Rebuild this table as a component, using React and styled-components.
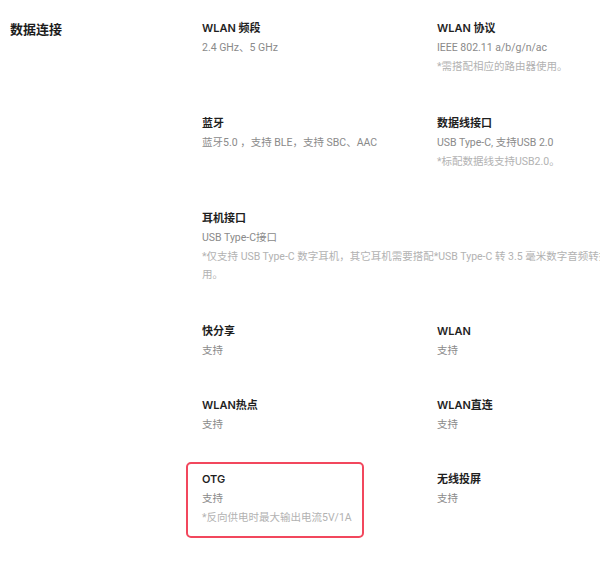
import React from "react";
import styled, { createGlobalStyle } from "styled-components";

const GlobalStyle = createGlobalStyle`
    html, body {
        margin: 0;
        padding: 0;
        background: #ffffff;
        overflow-x: hidden;
    }
    body {
        font-family: Inter, "Noto Sans CJK SC", sans-serif;
        -webkit-font-smoothing: antialiased;
    }
`;

const specs = [
    {
        title: "WLAN 频段",
        value: "2.4 GHz、5 GHz",
    },
    {
        title: "WLAN 协议",
        value: "IEEE 802.11 a/b/g/n/ac",
        note: "*需搭配相应的路由器使用。",
    },
    {
        title: "蓝牙",
        value: "蓝牙5.0 ，支持 BLE，支持 SBC、AAC",
    },
    {
        title: "数据线接口",
        value: "USB Type-C, 支持USB 2.0",
        note: "*标配数据线支持USB2.0。",
    },
    {
        title: "耳机接口",
        value: "USB Type-C接口",
        note: ["*仅支持 USB Type-C 数字耳机，其它耳机需要搭配*USB Type-C 转 3.5 毫米数字音频转接线使", "用。"],
        wide: true,
    },
    { title: "快分享", value: "支持" },
    { title: "WLAN", value: "支持" },
    { title: "WLAN热点", value: "支持" },
    { title: "WLAN直连", value: "支持" },
    {
        title: "OTG",
        value: "支持",
        note: "*反向供电时最大输出电流5V/1A",
        marked: true,
    },
    { title: "无线投屏", value: "支持" },
];

const App = () => {
    return <>
        <GlobalStyle />
        <Section>
            <Heading>数据连接</Heading>
            <SpecGrid>
                { specs.map(s =>
                    <SpecItem key={ s.title } $wide={ s.wide } $marked={ s.marked }>
                        <SpecTitle>{ s.title }</SpecTitle>
                        <SpecValue>{ s.value }</SpecValue>
                        { s.note && (Array.isArray(s.note) ?
                            <SpecNote>
                                <NoteLine>{ s.note[0] }</NoteLine>
                                <NoteLine>{ s.note[1] }</NoteLine>
                            </SpecNote>
                            :
                            <SpecNote>{ s.note }</SpecNote>
                        ) }
                    </SpecItem>
                ) }
            </SpecGrid>
        </Section>
    </>
}

const Section = styled.section`
    display: flex;
    align-items: flex-start;
    padding: 19px 0 40px 10px;
`;

const Heading = styled.h2`
    flex: 0 0 192px;
    margin: 1px 0 0;
    font-size: 13px;
    line-height: 19px;
    font-weight: 700;
    color: #1c1c1c;
`;

const SpecGrid = styled.div`
    display: grid;
    grid-template-columns: 235px 235px;
    row-gap: 36px;
    align-items: start;
`;

const SpecItem = styled.div`
    position: relative;
    grid-column: ${ p => p.$wide ? "1 / -1" : "auto" };

    ${ p => p.$marked && `
        &::after {
            content: "";
            position: absolute;
            left: -16px;
            top: -8px;
            width: 178px;
            height: 76px;
            box-sizing: border-box;
            border: 2.5px solid #f2475d;
            border-radius: 5px;
            pointer-events: none;
        }
    ` }
`;

const SpecTitle = styled.div`
    font-size: 11px;
    line-height: 19px;
    font-weight: 600;
    color: #1f1f1f;
`;

const SpecValue = styled.div`
    font-family: Roboto, "Noto Sans CJK SC", sans-serif;
    font-size: 10.5px;
    line-height: 19px;
    color: #8a8a8a;
`;

const SpecNote = styled.div`
    margin: 1px 0 2px;
    font-family: Roboto, "Noto Sans CJK SC", sans-serif;
    font-size: 10.5px;
    line-height: 18px;
    color: #b2b2b2;
`;

const NoteLine = styled.div`
    white-space: nowrap;
`;

export default App;
